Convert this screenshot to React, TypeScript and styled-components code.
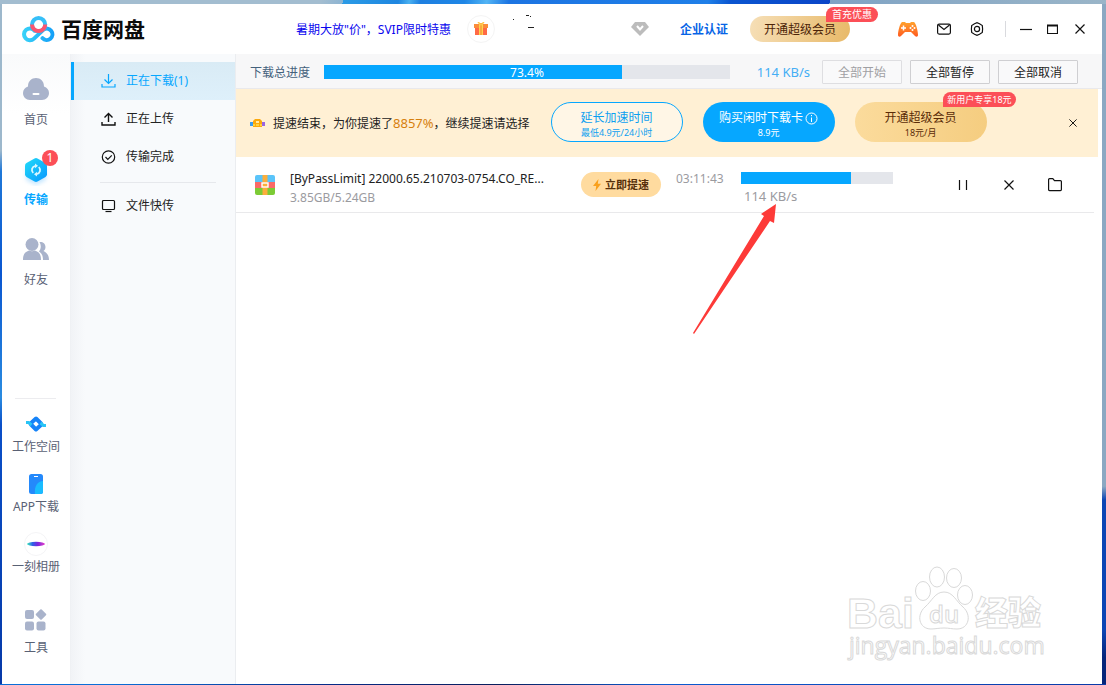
import React from 'react';
import styled, { createGlobalStyle, css } from 'styled-components';

const blue = '#06a7ff';

const GlobalStyle = createGlobalStyle`
  *, *::before, *::after { box-sizing: border-box; }
  body {
    margin: 0;
    font-family: "Noto Sans", "Noto Sans CJK SC", sans-serif;
    font-size: 12px;
    line-height: 18px;
    color: #222;
  }
  a { color: inherit; text-decoration: none; }
  button { font: inherit; color: inherit; border: 0; padding: 0; background: none; cursor: pointer; }
  svg { display: block; flex: none; }
`;

/* ---------- desktop and window ---------- */

const Desktop = styled.div`
  min-height: 100vh;
  display: flex;
  padding: 4px 4px 1px 2px;
  background:
    linear-gradient(90deg, #0a6fd8 0 10%, #062a86 30%, #0a1e5c 45%, #0b5bd0 60%, #0a3aa8) bottom / 100% 1px no-repeat,
    linear-gradient(100deg, #a3bdd0 0 29%, #8db4d2 31%, #2b9be6 31%, #1e86e0 36%, #4ab0f0 37%, #1e7fe0 38%, #1e86e6 42%, #52b4f4 44%, #1c74e2 46%, #1f7fe8 64%, #0a55d0 66%, #0a45c8 75%, #7fa3c4 75%, #9ab5c8) top / 100% 4px no-repeat,
    linear-gradient(180deg, #9db8cc 0 22%, #1f78d8 25%, #0a56d0 40%, #2a8be0 58%, #0a4fc8 62%, #0639a8) left / 2px 100% no-repeat,
    linear-gradient(180deg, #8ba8c2 0 71%, #0d45b4 73% 92%, #06257a 96%) right / 4px 100% no-repeat;
`;

const Window = styled.div`
  flex: 1;
  min-width: 0;
  display: flex;
  flex-direction: column;
  background: #fff;
`;

const Header = styled.header`
  display: flex;
  align-items: center;
  height: 50px;
  padding: 0 16px 0 20px;
`;

const Brand = styled.h1`
  display: flex;
  align-items: center;
  gap: 5px;
  margin: 0;
  font-size: 21px;
  line-height: 26px;
  font-weight: 700;
  color: #0b0b0b;
`;

const Promo = styled.a`
  margin-left: 151px;
  padding-top: 2px;
  color: #0a06ee;
  white-space: nowrap;
`;

const GiftButton = styled.button`
  display: grid;
  place-items: center;
  width: 28px;
  height: 28px;
  margin-left: 16px;
  border: 1px solid #f4f4f4;
  border-radius: 50%;
`;

const UserName = styled.div`
  flex: 1;
  padding: 0 0 16px 17px;
`;

const CertLink = styled.a`
  margin-left: 31px;
  padding-top: 2px;
  font-weight: 700;
  color: #0664e6;
`;

const VipWrap = styled.div`
  position: relative;
  margin: 0 48px 0 22px;
`;

const VipButton = styled.button`
  display: block;
  width: 100px;
  height: 26px;
  padding-top: 2px;
  border-radius: 13px;
  background: linear-gradient(100deg, #f6dfb7, #e8b968);
  color: #4b2307;
`;

const Badge = styled.span<{ $top: number; $right: number; $small?: boolean }>`
  position: absolute;
  top: ${p => p.$top}px;
  right: ${p => p.$right}px;
  padding: 0 ${p => (p.$small ? 4 : 6)}px;
  border-radius: 8px 8px 8px 0;
  background: #fc4f57;
  color: #fff;
  font-size: ${p => (p.$small ? 9 : 10)}px;
  line-height: 15px;
  white-space: nowrap;
`;

const HeaderTools = styled.div`
  display: flex;
  align-items: center;
  gap: 19px;
`;

const WindowControls = styled.div`
  display: flex;
  align-items: center;
  gap: 14px;
  margin-left: 21px;
  padding-left: 13px;
  border-left: 1px solid #d9dade;
`;

const IconButton = styled.button`
  display: grid;
  place-items: center;
  min-width: 13px;
  height: 16px;
`;

const Body = styled.div`
  flex: 1;
  display: flex;
`;

/* ---------- left rail ---------- */

const Rail = styled.nav`
  flex: none;
  display: flex;
  flex-direction: column;
  width: 68px;
  background: linear-gradient(#f9fafb, #fff 60px);
`;

const RailItem = styled.a<{ $active?: boolean }>`
  display: flex;
  flex-direction: column;
  align-items: center;
  gap: 7px;
  height: 80px;
  padding-top: 20px;
  color: #596174;
  ${p => p.$active && css`
    color: ${blue};
    font-weight: 700;
  `}
`;

const RailIcon = styled.span`
  position: relative;
  display: grid;
  place-items: center;
  width: 30px;
  height: 30px;
`;

const Count = styled.span`
  position: absolute;
  top: -4px;
  right: -7px;
  width: 16px;
  height: 16px;
  border-radius: 50%;
  background: #fc4f57;
  color: #fff;
  font-weight: 400;
  line-height: 16px;
  text-align: center;
`;

const RailFooter = styled.div`
  margin-top: auto;
  display: flex;
  flex-direction: column;
  gap: 16px;
  padding: 14px 0 27px;
  background: linear-gradient(#ececef, #ececef) 13px 0 / 41px 1px no-repeat;
`;

const AppLink = styled.a<{ $apart?: boolean }>`
  display: flex;
  flex-direction: column;
  align-items: center;
  gap: ${p => (p.$apart ? 7 : 2)}px;
  margin-top: ${p => (p.$apart ? 16 : 0)}px;
  color: #596174;
  white-space: nowrap;
`;

const AppIcon = styled.span`
  display: grid;
  place-items: center;
  width: 24px;
  height: 24px;
`;

/* ---------- transfer menu ---------- */

const Menu = styled.nav`
  flex: none;
  width: 166px;
  padding-top: 8px;
  border-left: 1px solid #eff1f4;
  border-right: 1px solid #ebedf0;
  background: linear-gradient(90deg, #f1f3f6, #f8fafc 14px);
`;

const MenuItem = styled.a<{ $active?: boolean }>`
  display: flex;
  align-items: center;
  gap: 10px;
  height: 38px;
  padding-left: 27px;
  border-left: 3px solid transparent;
  ${p => p.$active && css`
    border-left-color: ${blue};
    background: linear-gradient(#d9ebf5, #def0fb);
    color: ${blue};
  `}
`;

const MenuRule = styled.hr`
  height: 1px;
  margin: 6px 19px 4px 29px;
  border: 0;
  background: #e6e8ec;
`;

/* ---------- main pane ---------- */

const Main = styled.main`
  position: relative;
  flex: 1;
  min-width: 0;
`;

const Toolbar = styled.div`
  display: flex;
  align-items: center;
  height: 35px;
  padding: 1px 24px 0 14px;
  border-bottom: 1px solid #e9e9ec;
  background: #f7f7f8;
`;

const ToolbarLabel = styled.span`
  padding-top: 2px;
  color: #44617c;
  white-space: nowrap;
`;

const Track = styled.div<{ $height: number }>`
  position: relative;
  height: ${p => p.$height}px;
  background: #e4e6eb;
`;

const TotalTrack = styled(Track)`
  flex: 1;
  margin-left: 14px;
`;

const Fill = styled.div`
  height: 100%;
  background: ${blue};
`;

const Percent = styled.span`
  position: absolute;
  inset: 0;
  color: #fff;
  line-height: 16px;
  text-align: center;
`;

const TotalSpeed = styled.span`
  width: 92px;
  padding-right: 12px;
  color: #45aef5;
  font-size: 13px;
  text-align: right;
  white-space: nowrap;
`;

const BatchButtons = styled.div`
  display: flex;
  gap: 8px;
`;

const BatchButton = styled.button`
  width: 80px;
  height: 24px;
  padding-top: 2px;
  border: 1px solid #cfcfd2;
  border-radius: 1px;
  background: #f9f9fa;
  color: #222;
  &:disabled { border-color: #dedee1; color: #a0a0a3; }
`;

const Banner = styled.section`
  display: flex;
  align-items: center;
  height: 68px;
  margin-right: 4px;
  padding: 0 19px 0 14px;
  background: #fff0d4;
`;

const BannerText = styled.p`
  margin: 0;
  padding-left: 8px;
  white-space: nowrap;
  em { color: #d67f0d; font-style: normal; font-size: 13px; }
`;

const Offers = styled.div`
  display: flex;
  gap: 20px;
  margin: 0 auto 2px 21px;
`;

const Offer = styled.button<{ $kind: 'outline' | 'solid' | 'gold' }>`
  position: relative;
  display: flex;
  flex-direction: column;
  align-items: center;
  justify-content: center;
  width: 132px;
  height: 40px;
  padding-top: 4px;
  border-radius: 20px;
  ${p => p.$kind === 'outline' && css`
    border: 1px solid ${blue};
    background: #fff6e6;
    color: #0c9ff0;
  `}
  ${p => p.$kind === 'solid' && css`
    background: ${blue};
    color: #fff;
  `}
  ${p => p.$kind === 'gold' && css`
    background: linear-gradient(90deg, #fbdb9c, #f5cd80);
    color: #5a2c08;
  `}
`;

const OfferTitle = styled.span`
  display: flex;
  align-items: center;
  gap: 2px;
  line-height: 18px;
  white-space: nowrap;
`;

const OfferPrice = styled.span`
  font-size: 9px;
  line-height: 12px;
`;

const TaskList = styled.ul`
  margin: 0 8px 0 0;
  padding: 0;
  list-style: none;
`;

const Task = styled.li`
  display: flex;
  align-items: center;
  height: 56px;
  padding: 0 32px 0 19px;
  border-bottom: 1px solid #e9e9eb;
`;

const TaskInfo = styled.div`
  flex: 1;
  min-width: 0;
  padding: 6px 0 0 15px;
`;

const TaskName = styled.div`
  line-height: 19px;
  white-space: nowrap;
`;

const TaskSize = styled.div`
  line-height: 19px;
  color: #9b9b9f;
`;

const BoostButton = styled.button`
  display: flex;
  align-items: center;
  justify-content: center;
  gap: 4px;
  width: 80px;
  height: 25px;
  border-radius: 13px;
  background: #ffdb9f;
  color: #56300b;
  font-size: 11px;
  font-weight: 700;
`;

const TimeLeft = styled.time`
  width: 80px;
  padding: 0 0 12px 15px;
  color: #9b9b9f;
`;

const TaskProgress = styled.div`
  width: 152px;
  padding-top: 7px;
`;

const TaskSpeed = styled.div`
  padding: 3px 0 0 3px;
  color: #9b9b9f;
  font-size: 13px;
`;

const TaskActions = styled.div`
  display: flex;
  align-items: center;
  gap: 33px;
  margin-left: 63px;
`;

/* ---------- overlays ---------- */

const Arrow = styled.svg`
  position: absolute;
  top: 150px;
  right: 325px;
`;

const Watermark = styled.svg`
  position: absolute;
  right: 52px;
  bottom: 14px;
  font-family: "Open Sans", "Noto Sans CJK SC", sans-serif;
`;

/* ---------- drawings ---------- */

const Logo = () => (
  <svg width="34" height="28" viewBox="0 0 34 28" fill="none" strokeWidth="4" aria-hidden="true">
    <defs>
      <linearGradient id="lg" x1="0" x2="34" y1="0" y2="0" gradientUnits="userSpaceOnUse">
        <stop stopColor="#3ad4f8" /><stop offset="1" stopColor="#129cf8" />
      </linearGradient>
    </defs>
    <path d="M20.5 23.2a5.7 5.7 0 1 0 1-8.6L12 23.6a5.9 5.9 0 1 1 .6-7.9" stroke="url(#lg)" strokeLinecap="round" />
    <circle cx="16.6" cy="9.7" r="6.6" stroke="#36bff8" />
    <path d="M10 9.500a6.600 6.600 0 0 0 13.200 0" stroke="#fb5570" />
  </svg>
);

const Gift = () => (
  <svg width="14" height="14" viewBox="0 0 14 14" aria-hidden="true">
    <path d="M1 6h12v7H1z" fill="#ff6a45" />
    <path d="M0 2h14v4H0z" fill="#fb8c3a" />
    <path d="M5 1h4v12H5z" fill="#ffd34f" />
    <path d="M7 1v12" stroke="#f3802f" />
    <path d="M7 3 4 0M7 3l3-3" stroke="#ffc44a" strokeWidth="1.5" />
  </svg>
);

const NameMarks = () => (
  <svg width="24" height="14" viewBox="0 0 24 14" aria-hidden="true">
    <path d="M1 5.5h1M14 1.500h3M18 2.500h1M16 13.500h6" stroke="#222" />
  </svg>
);

const Diamond = () => (
  <svg width="18" height="14" viewBox="0 0 18 14" aria-hidden="true">
    <path d="M4 0h10l4 5-9 9-9-9z" fill="#bcbcbc" />
    <path d="m6 4 3 3.500L12 4" stroke="#fff" strokeWidth="2" fill="none" />
  </svg>
);

const Gamepad = () => (
  <svg width="20" height="15" viewBox="0 0 20 15" aria-hidden="true">
    <defs>
      <linearGradient id="gp" x2="0" y2="1"><stop stopColor="#ffa32e" /><stop offset="1" stopColor="#ff5a1f" /></linearGradient>
    </defs>
    <path d="M4 0h3l1 1h4l1-1h3c2 1 4 9 4 13 0 2-2 2-3 1l-4-4H7l-4 4c-1 1-3 1-3-1C0 9 2 1 4 0z" fill="url(#gp)" />
    <path d="M5.500 3.500v5M3 6h5" stroke="#fff" strokeWidth="1.500" />
    <g fill="#fff"><circle cx="14.500" cy="4" r="1" /><circle cx="14.500" cy="8" r="1" /><circle cx="12.500" cy="6" r="1" /><circle cx="16.500" cy="6" r="1" /></g>
  </svg>
);

const line = { fill: 'none', stroke: '#111', strokeWidth: 1.2, 'aria-hidden': true } as const;

const Mail = () => (
  <svg width="14" height="12" viewBox="0 0 14 12" {...line}>
    <rect x=".6" y="1.100" width="12.800" height="10" rx="1.500" /><path d="m1.500 2 5.500 4.500L12.500 2" />
  </svg>
);

const Gear = () => (
  <svg width="14" height="14" viewBox="0 0 14 14" {...line}>
    <path d="M4.500 1.800 7 .7l2.500 1.100 2.800 1.700.3 3.500-.3 3.500-2.800 1.700L7 13.300l-2.500-1.100-2.800-1.700L1.400 7l.3-3.500z" /><circle cx="7" cy="7" r="2.600" />
  </svg>
);

const Cross = ({ size }: { size: number }) => (
  <svg width={size} height={size} viewBox="0 0 10 10" {...line}><path d="m.5.5 9 9M9.500.5l-9 9" /></svg>
);

const Cloud = () => (
  <svg width="26" height="22" viewBox="0 0 26 22" aria-hidden="true">
    <path d="M5 8.500C5 3 8.500 0 13 0s8 3 8 8.500c3 .8 5 3.500 5 6.500 0 4-3 7-7 7H7c-4 0-7-3-7-7 0-3 2-5.700 5-6.500z" fill="#a9b3cb" />
    <rect x="9.500" y="15" width="7" height="2" rx="1" fill="#fff" />
  </svg>
);

const Transfer = () => (
  <svg width="30" height="32" viewBox="0 0 30 32" aria-hidden="true">
    <defs>
      <linearGradient id="tr" x2="1" y2="1"><stop stopColor="#22dcf8" /><stop offset="1" stopColor="#0696ff" /></linearGradient>
      <filter id="glow" x="-50%" y="-50%" width="200%" height="200%"><feGaussianBlur stdDeviation="2" /></filter>
    </defs>
    <path d="M15 8 25 14v12l-10 5-10-5V14z" fill="#8fd0ff" opacity=".5" filter="url(#glow)" />
    <path d="M13.500 4.500q1.500-.8 3 0l8 4.600q1.500.9 1.500 2.600v8.600q0 1.700-1.500 2.600l-8 4.600q-1.500.8-3 0l-8-4.600Q4 22 4 20.300v-8.600Q4 10 5.500 9.100z" fill="url(#tr)" />
    <path d="M14.500 11.800c-3.800.8-4.600 4.800-2.300 7.200M15.500 20.200c3.800-.8 4.600-4.800 2.300-7.200" stroke="#d8f6ff" strokeWidth="1.800" fill="none" />
    <path d="m14 9.500 3 2.300-3 2.400zM16 17.800l-3 2.400 3 2.300z" fill="#d8f6ff" />
  </svg>
);

const Friends = () => (
  <svg width="26" height="22" viewBox="0 0 26 22" fill="#a9b3cb" aria-hidden="true">
    <circle cx="9" cy="6.500" r="6.500" /><path d="M0 22c0-6 2-8 6-9.500 2 1 4 1 6 0 4 1.500 6 3.500 6 9.500z" />
    <path d="M16.500 4c3-.5 6 1.500 6 5 0 2-.8 3-2 4 4 2 5.500 5 5.500 9h-6c0-4-1-6.500-4-8.500 2-2.500 2.500-6 .5-9.500z" />
  </svg>
);

const Workspace = () => (
  <svg width="20" height="16" viewBox="0 0 20 16" fill="none" strokeWidth="4" strokeLinejoin="round" aria-hidden="true">
    <path d="M4 8 10 2.500 15.500 8" stroke="#1683f8" /><path d="M16 8l-6 5.500L4.500 8" stroke="#1683f8" />
    <path d="M0 6.500h2.500L5.500 9M20 9.500h-2.500L14.500 7" stroke="#28c4f6" strokeWidth="3" />
  </svg>
);

const Phone = () => (
  <svg width="14" height="20" viewBox="0 0 14 20" aria-hidden="true">
    <rect width="14" height="20" rx="2.500" fill="#2489fb" />
    <path d="M14 7c-5 0-9 5-8 13h5.500q2.500 0 2.500-2.500z" fill="#19bcff" /><path d="M5 2.500h4" stroke="#fff" />
  </svg>
);

const Album = () => (
  <svg width="24" height="24" viewBox="0 0 24 24" aria-hidden="true">
    <defs>
      <linearGradient id="al"><stop stopColor="#3ff0b8" /><stop offset=".3" stopColor="#2c62e8" /><stop offset=".6" stopColor="#7a25dc" /><stop offset="1" stopColor="#e63fc8" /></linearGradient>
    </defs>
    <circle cx="12" cy="12" r="11.500" fill="#fff" stroke="#f4f4f6" /><ellipse cx="12" cy="12" rx="9" ry="2.200" fill="url(#al)" />
  </svg>
);

const Tools = () => (
  <svg width="22" height="22" viewBox="0 0 22 22" fill="#a9b3cb" aria-hidden="true">
    <rect y="1" width="9" height="9" rx="2" /><rect y="12.500" width="9" height="9" rx="2" /><rect x="11.500" y="12.500" width="9" height="9" rx="2" />
    <rect x="12" y="1.500" width="8" height="8" rx="1" transform="rotate(45 16 5.500)" />
  </svg>
);

const Download = () => (
  <svg width="15" height="14" viewBox="0 0 15 14" {...line} stroke={blue}><path d="M7.500 0v9M3.500 5.500l4 4 4-4M1 10v3h13v-3" /></svg>
);
const Upload = () => (
  <svg width="15" height="14" viewBox="0 0 15 14" {...line} strokeWidth={1.4}><path d="M7.500 10V1.500M3.500 5.500l4-4 4 4M1 10v3h13v-3" /></svg>
);
const Done = () => (
  <svg width="15" height="14" viewBox="0 0 15 14" {...line}><circle cx="7.500" cy="7" r="6.200" /><path d="m4.500 7 2.300 2.300 4-4" /></svg>
);
const Monitor = () => (
  <svg width="15" height="14" viewBox="0 0 15 14" {...line}><rect x="1.500" y="1.500" width="12" height="9" rx="1" /><path d="M4.500 12.500h6" /></svg>
);

const Emblem = () => (
  <svg width="15" height="9" viewBox="0 0 15 9" aria-hidden="true">
    <path d="M0 3h3v4H0z" fill="#3a9cf0" /><path d="M12 3h3v4h-3z" fill="#9a65e0" />
    <path d="M3 2 5 0h5l2 2v6H3z" fill="#fba90c" /><path d="M6 2h3v2H6z" fill="#ffe9a8" /><path d="M3 5h2v2H3zM10 5h2v2h-2zM6 5h3v2H6z" fill="#ffd23c" />
  </svg>
);

const Info = () => (
  <svg width="13" height="13" viewBox="0 0 13 13" fill="none" stroke="#fff" aria-hidden="true"><circle cx="6.500" cy="6.500" r="5.500" /><path d="M6.500 3v1.200M6.500 5.500v4.500" /></svg>
);

const Archive = () => (
  <svg width="20" height="20" viewBox="0 0 20 20" aria-hidden="true">
    <path d="M2 0h16q2 0 2 2v5H0V2q0-2 2-2z" fill="#5ac4fa" /><path d="M0 7h20v6H0z" fill="#fb6a68" />
    <path d="M0 13h20v5q0 2-2 2H2q-2 0-2-2z" fill="#7ccb35" /><path d="M7.500 0h5v20h-5z" fill="#fbae3c" />
    <rect x="7" y="8" width="6" height="4" fill="#fbae3c" stroke="#fff" strokeWidth="1.400" />
  </svg>
);

const Bolt = () => (
  <svg width="8" height="12" viewBox="0 0 8 12" aria-hidden="true"><path d="M5.500 0 0 7h3.200L2.500 12 8 4.800H4.800z" fill="#f9a01c" /></svg>
);

const Folder = () => (
  <svg width="14" height="14" viewBox="0 0 14 14" {...line}><path d="M.6 1.600q0-1 1-1h3.200l1.700 2h5.900q1 0 1 1v8q0 1-1 1H1.600q-1 0-1-1z" /></svg>
);

/* ---------- page ---------- */

const menu = [
  { label: '正在下载(1)', icon: <Download />, active: true },
  { label: '正在上传', icon: <Upload /> },
  { label: '传输完成', icon: <Done /> },
];

const apps = [
  { label: '工作空间', icon: <Workspace /> },
  { label: 'APP下载', icon: <Phone /> },
  { label: '一刻相册', icon: <Album /> },
  { label: '工具', icon: <Tools />, apart: true },
];

const total = 73.4;
const taskDone = 72.5;

export default function App() {
  return (
    <Desktop lang="zh-CN">
      <GlobalStyle />
      <Window>
        <Header>
          <Brand><Logo />百度网盘</Brand>
          <Promo href="#svip">暑期大放"价"，SVIP限时特惠</Promo>
          <GiftButton aria-label="礼物"><Gift /></GiftButton>
          <UserName><NameMarks /></UserName>
          <Diamond />
          <CertLink href="#cert">企业认证</CertLink>
          <VipWrap>
            <VipButton>开通超级会员</VipButton>
            <Badge $top={-9} $right={-28}>首充优惠</Badge>
          </VipWrap>
          <HeaderTools>
            <IconButton aria-label="游戏"><Gamepad /></IconButton>
            <IconButton aria-label="消息"><Mail /></IconButton>
            <IconButton aria-label="设置"><Gear /></IconButton>
          </HeaderTools>
          <WindowControls>
            <IconButton aria-label="最小化"><svg width="12" height="12" viewBox="0 0 12 12" {...line}><path d="M0 6.500h12" /></svg></IconButton>
            <IconButton aria-label="最大化"><svg width="11" height="10" viewBox="0 0 11 10" {...line}><path d="M.5 1v8.500h10V1" /><path d="M0 1.500h11" strokeWidth="2" /></svg></IconButton>
            <IconButton aria-label="关闭"><Cross size={10} /></IconButton>
          </WindowControls>
        </Header>
        <Body>
          <Rail aria-label="主导航">
            <RailItem href="#home"><RailIcon><Cloud /></RailIcon>首页</RailItem>
            <RailItem href="#transfer" $active><RailIcon><Transfer /><Count>1</Count></RailIcon>传输</RailItem>
            <RailItem href="#friends"><RailIcon><Friends /></RailIcon>好友</RailItem>
            <RailFooter>
              {apps.map(a => (
                <AppLink key={a.label} href="#app" $apart={a.apart}><AppIcon>{a.icon}</AppIcon>{a.label}</AppLink>
              ))}
            </RailFooter>
          </Rail>
          <Menu aria-label="传输列表">
            {menu.map(m => (
              <MenuItem key={m.label} href="#list" $active={m.active}>{m.icon}{m.label}</MenuItem>
            ))}
            <MenuRule />
            <MenuItem href="#quick"><Monitor />文件快传</MenuItem>
          </Menu>
          <Main>
            <Toolbar>
              <ToolbarLabel id="total-label">下载总进度</ToolbarLabel>
              <TotalTrack $height={14} role="progressbar" aria-labelledby="total-label" aria-valuenow={total}>
                <Fill style={{ width: `${total}%` }} />
                <Percent>{total}%</Percent>
              </TotalTrack>
              <TotalSpeed>114 KB/s</TotalSpeed>
              <BatchButtons>
                <BatchButton disabled>全部开始</BatchButton>
                <BatchButton>全部暂停</BatchButton>
                <BatchButton>全部取消</BatchButton>
              </BatchButtons>
            </Toolbar>
            <Banner>
              <Emblem />
              <BannerText>提速结束，为你提速了<em>8857%</em>，继续提速请选择</BannerText>
              <Offers>
                <Offer $kind="outline"><OfferTitle>延长加速时间</OfferTitle><OfferPrice>最低4.9元/24小时</OfferPrice></Offer>
                <Offer $kind="solid"><OfferTitle>购买闲时下载卡<Info /></OfferTitle><OfferPrice>8.9元</OfferPrice></Offer>
                <Offer $kind="gold">
                  <OfferTitle>开通超级会员</OfferTitle><OfferPrice>18元/月</OfferPrice>
                  <Badge $top={-10} $right={-29} $small>新用户专享18元</Badge>
                </Offer>
              </Offers>
              <IconButton aria-label="关闭提示"><Cross size={8} /></IconButton>
            </Banner>
            <TaskList>
              <Task>
                <Archive />
                <TaskInfo>
                  <TaskName>[ByPassLimit] 22000.65.210703-0754.CO_RE...</TaskName>
                  <TaskSize>3.85GB/5.24GB</TaskSize>
                </TaskInfo>
                <BoostButton><Bolt />立即提速</BoostButton>
                <TimeLeft>03:11:43</TimeLeft>
                <TaskProgress>
                  <Track $height={12} role="progressbar" aria-label="下载进度" aria-valuenow={taskDone}>
                    <Fill style={{ width: `${taskDone}%` }} />
                  </Track>
                  <TaskSpeed>114 KB/s</TaskSpeed>
                </TaskProgress>
                <TaskActions>
                  <IconButton aria-label="暂停"><svg width="10" height="10" viewBox="0 0 10 10" {...line}><path d="M1.500 0v10M8.500 0v10" /></svg></IconButton>
                  <IconButton aria-label="取消"><Cross size={10} /></IconButton>
                  <IconButton aria-label="打开文件夹"><Folder /></IconButton>
                </TaskActions>
              </Task>
            </TaskList>
            <Arrow width="84" height="130" viewBox="0 0 84 130" aria-hidden="true">
              <path d="M83 0 68 10l3 2L0 129l1 1L77 17l4 2z" fill="#fd3a38" />
            </Arrow>
            <Watermark width="204" height="104" viewBox="0 0 204 104" fill="#fff" stroke="#d9d9d9" strokeWidth="1" aria-hidden="true">
              <text x="1" y="62" fontSize="43" fontWeight="700" fontFamily="Liberation Sans">Bai</text>
              <ellipse cx="77" cy="25" rx="7.500" ry="9.500" /><ellipse cx="91" cy="11" rx="7.500" ry="10" />
              <ellipse cx="108" cy="12" rx="7.500" ry="9.500" /><ellipse cx="119" cy="29" rx="7.500" ry="9.500" />
              <path d="M98 26c9 0 12 9 19 15 9 8 6 22-6 22-5 0-8-1-13-1s-9 1-13 1c-12 0-15-14-6-22 7-6 10-15 19-15z" />
              <text x="83" y="57" fontSize="24" fontWeight="600">du</text>
              <text x="129" y="59" fontSize="33" fontWeight="900">经验</text>
              <text x="3" y="88" fontSize="23">jingyan.baidu.com</text>
            </Watermark>
          </Main>
        </Body>
      </Window>
    </Desktop>
  );
}
